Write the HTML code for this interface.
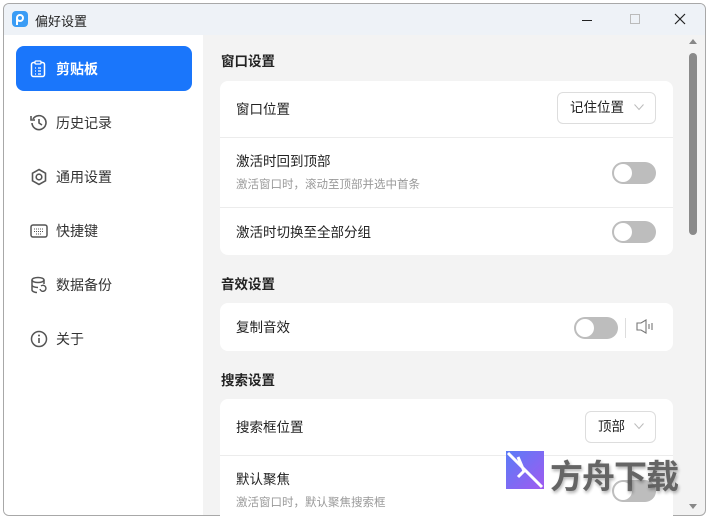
<!DOCTYPE html>
<html><head><meta charset="utf-8"><style>
*{margin:0;padding:0;box-sizing:border-box}
body{width:709px;height:519px;overflow:hidden;background:#fff;font-family:"Liberation Sans","Noto Sans CJK SC",sans-serif;position:relative}
.win{position:absolute;left:3px;top:3px;width:703px;height:513px;border:1px solid #a8a8a8;border-radius:6px;overflow:hidden;background:#f3f3f3}
.title{position:absolute;left:0;top:0;width:100%;height:31px;background:#eef2f7}
.side{position:absolute;left:0;top:31px;width:199px;height:490px;background:#fff}
.abs{position:absolute}
.item{position:absolute;left:12px;width:176px;height:45px;border-radius:8px;font-size:14px;color:#333;display:flex;align-items:center}
.item svg{position:absolute;left:14px}
.item span{position:absolute;left:40px}
.card{position:absolute;left:216px;width:453px;background:#fff;border-radius:8px}
.sec{position:absolute;left:218px;font-size:13.5px;font-weight:bold;color:#222}
.lab{position:absolute;left:232px;font-size:13.5px;color:#222}
.sub{position:absolute;left:232px;font-size:11.5px;color:#999}
.line{position:absolute;left:216px;width:453px;height:1px;background:#ececec}
.tg{position:absolute;width:44px;height:22px;border-radius:11px;background:#bdbdbd}
.tg::after{content:"";position:absolute;left:2px;top:2px;width:18px;height:18px;border-radius:50%;background:#fff}
.dd{position:absolute;height:32px;border:1px solid #ddd;border-radius:6px;background:#fff;font-size:13.5px;color:#222;line-height:30px;padding-left:12px}
.dd svg{position:absolute;right:11px;top:11px}
</style></head><body>
<div class="win">
<div class="title">
 <div class="abs" style="left:8px;top:7px;width:16px;height:16px;border-radius:4px;background:#3a9cf5"><div class="abs" style="left:4px;top:3px;width:8px;height:8px;border:2px solid #fff;border-radius:50%"></div><div class="abs" style="left:4px;top:7px;width:2px;height:7px;background:#fff"></div></div>
 <div class="abs" style="left:31px;top:7px;font-size:13px;color:#222">偏好设置</div>
 <div class="abs" style="left:578px;top:16px;width:10px;height:1px;background:#222"></div>
 <div class="abs" style="left:626px;top:10px;width:10px;height:10px;border:1px solid #bbb"></div>
 <svg class="abs" style="left:670px;top:9px" width="12" height="12"><path d="M1 1L11 11M11 1L1 11" stroke="#222" stroke-width="1.2"/></svg>
</div>
<div class="side">
 <div class="item" style="top:11px;background:#1a76fb;color:#fff;font-weight:bold">
  <svg width="16" height="18" viewBox="0 0 16 18"><rect x="1.5" y="2.5" width="13" height="14" rx="2" fill="none" stroke="#fff" stroke-width="1.5"/><rect x="5" y="1" width="6" height="3" rx="1" fill="#1a76fb" stroke="#fff" stroke-width="1.3"/><path d="M5 8h1M8 8h3M5 11h1M8 11h3M5 14h1M8 14h3" stroke="#fff" stroke-width="1.3"/></svg><span>剪贴板</span></div>
 <div class="item" style="top:65px"><svg width="18" height="18" viewBox="0 0 18 18"><path d="M3 5A7 7 0 1 1 2 9" fill="none" stroke="#555" stroke-width="1.6"/><path d="M1 2v4h4" fill="none" stroke="#555" stroke-width="1.6"/><path d="M9 5v4l3 2" fill="none" stroke="#555" stroke-width="1.6"/></svg><span>历史记录</span></div>
 <div class="item" style="top:119px"><svg width="18" height="18" viewBox="0 0 18 18"><path d="M9 1.5L15.5 5.2V12.8L9 16.5L2.5 12.8V5.2Z" fill="none" stroke="#555" stroke-width="1.6"/><circle cx="9" cy="9" r="2.8" fill="none" stroke="#555" stroke-width="1.6"/></svg><span>通用设置</span></div>
 <div class="item" style="top:173px"><svg width="18" height="16" viewBox="0 0 18 16"><rect x="1" y="2" width="16" height="12" rx="2" fill="none" stroke="#555" stroke-width="1.5"/><path d="M4 6h10M4 8.5h10M6 11h6" stroke="#555" stroke-width="1" stroke-dasharray="1 1"/></svg><span>快捷键</span></div>
 <div class="item" style="top:227px"><svg width="18" height="18" viewBox="0 0 18 18"><ellipse cx="8" cy="4" rx="6" ry="2.5" fill="none" stroke="#555" stroke-width="1.5"/><path d="M2 4v10c0 1.5 3 2.5 5 2.5M14 4v4M2 9c0 1.5 3 2.5 6 2.5" fill="none" stroke="#555" stroke-width="1.5"/><path d="M10 13a3 3 0 1 0 1-3" fill="none" stroke="#555" stroke-width="1.4"/></svg><span>数据备份</span></div>
 <div class="item" style="top:281px"><svg width="18" height="18" viewBox="0 0 18 18"><circle cx="9" cy="9" r="7.5" fill="none" stroke="#555" stroke-width="1.5"/><path d="M9 8v5" stroke="#555" stroke-width="1.6"/><circle cx="9" cy="5.5" r="1" fill="#555"/></svg><span>关于</span></div>
</div>
<div class="abs" style="left:685px;top:35px;width:0;height:0;border-left:4px solid transparent;border-right:4px solid transparent;border-bottom:5px solid #888"></div>
<div class="abs" style="left:685px;top:49px;width:8px;height:182px;border-radius:4px;background:#8a8a8a"></div>
<div class="abs" style="left:685px;top:500px;width:0;height:0;border-left:4px solid transparent;border-right:4px solid transparent;border-top:5px solid #888"></div>
</div>
<div class="sec" style="left:221px;top:50px">窗口设置</div>
<div class="card" style="left:220px;top:81px;height:174px"></div>
<div class="line" style="left:220px;top:137px"></div>
<div class="line" style="left:220px;top:207px"></div>
<div class="lab" style="left:236px;top:98px">窗口位置</div>
<div class="dd" style="left:557px;top:92px;width:99px">记住位置<svg width="10" height="7"><path d="M.5 .5L5 5.5 9.5 .5" fill="none" stroke="#bbb"/></svg></div>
<div class="lab" style="left:236px;top:150px">激活时回到顶部</div>
<div class="sub" style="left:236px;top:176px">激活窗口时，滚动至顶部并选中首条</div>
<div class="tg" style="left:612px;top:162px"></div>
<div class="lab" style="left:236px;top:221px">激活时切换至全部分组</div>
<div class="tg" style="left:612px;top:221px"></div>
<div class="sec" style="left:221px;top:273px">音效设置</div>
<div class="card" style="left:220px;top:303px;height:48px"></div>
<div class="lab" style="left:236px;top:316px">复制音效</div>
<div class="tg" style="left:574px;top:317px"></div>
<div class="abs" style="left:625px;top:318px;width:1px;height:20px;background:#ddd"></div>
<svg class="abs" style="left:636px;top:319px" width="20" height="15" viewBox="0 0 20 15"><path d="M1 4h4l5-3v13l-5-3H1z" fill="none" stroke="#777" stroke-width="1.1"/><path d="M13 5v5M16 4v7" stroke="#777" stroke-width="1.1"/></svg>
<div class="sec" style="left:221px;top:369px">搜索设置</div>
<div class="card" style="left:220px;top:399px;height:130px"></div>
<div class="line" style="left:220px;top:455px"></div>
<div class="lab" style="left:236px;top:416px">搜索框位置</div>
<div class="dd" style="left:585px;top:411px;width:71px">顶部<svg width="10" height="7"><path d="M.5 .5L5 5.5 9.5 .5" fill="none" stroke="#bbb"/></svg></div>
<div class="lab" style="left:236px;top:468px">默认聚焦</div>
<div class="sub" style="left:236px;top:494px">激活窗口时，默认聚焦搜索框</div>
<div class="tg" style="left:612px;top:480px"></div>
<svg class="abs" style="left:506px;top:451px" width="38" height="38" viewBox="0 0 38 38"><defs><linearGradient id="g" x1="0" y1="0" x2="1" y2="1"><stop offset="0" stop-color="#5a7cf7"/><stop offset="1" stop-color="#a05af0"/></linearGradient></defs><rect width="38" height="38" fill="url(#g)"/><path d="M2 2L36 36M12 6l6 14-6 6" stroke="#fff" stroke-width="3" fill="none"/></svg>
<div class="abs" style="left:550px;top:450px;font-size:33px;color:#555;font-weight:bold;letter-spacing:-1px;text-shadow:1px 2px 3px rgba(0,0,0,.35);opacity:.9">方舟下载</div>
</body></html>
